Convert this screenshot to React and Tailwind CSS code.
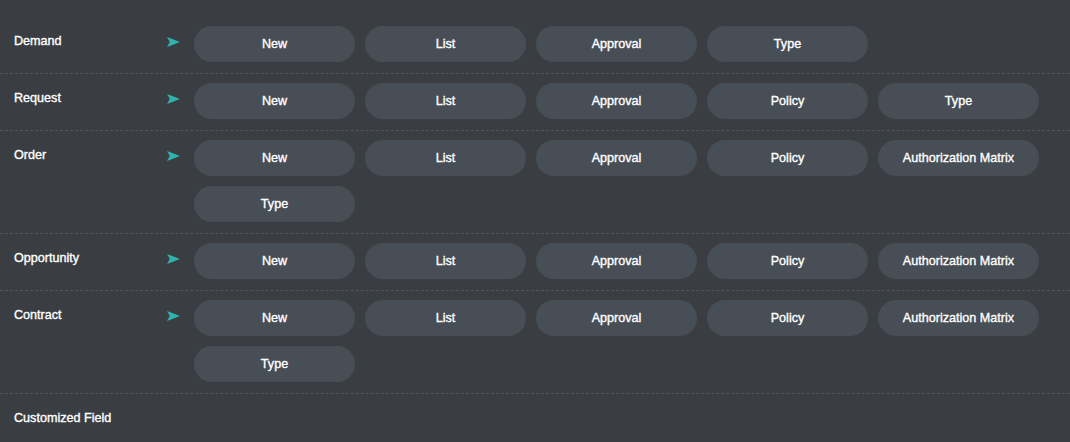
const sections = [
  { label: 'Demand', items: ['New', 'List', 'Approval', 'Type'] },
  { label: 'Request', items: ['New', 'List', 'Approval', 'Policy', 'Type'] },
  { label: 'Order', items: ['New', 'List', 'Approval', 'Policy', 'Authorization Matrix', 'Type'] },
  { label: 'Opportunity', items: ['New', 'List', 'Approval', 'Policy', 'Authorization Matrix'] },
  { label: 'Contract', items: ['New', 'List', 'Approval', 'Policy', 'Authorization Matrix', 'Type'] },
  { label: 'Customized Field', items: [] },
];

function Arrow() {
  return (
    <svg width="13" height="10" viewBox="0 0 13 10" className="block">
      <path d="M0 0 L13 5 L0 10 L2.8 5 Z" fill="#2eb3ae" />
    </svg>
  );
}

export default function App() {
  return (
    <div
      className="w-[1070px] h-[442px] overflow-hidden bg-[#3a3e43] pt-[17px] text-white text-[12.6px] [-webkit-text-stroke:0.35px_#fff]"
      style={{ fontFamily: '"Liberation Sans", Arial, sans-serif' }}
    >
      {sections.map((s) => (
        <div
          key={s.label}
          className="flex pt-[9px] pb-[11px] border-b border-dashed border-[#51565c] last:border-b-0 min-h-[57px]"
        >
          <div className="w-[167px] pl-[14px] pt-[7px] leading-[16px] shrink-0">{s.label}</div>
          {s.items.length > 0 && (
            <>
              <div className="w-[27px] shrink-0 pt-[11px]">
                <Arrow />
              </div>
              <div className="flex flex-wrap gap-[10px] w-[855px]">
                {s.items.map((it, i) => (
                  <button
                    key={i}
                    className="w-[161px] h-[36px] rounded-full bg-[#474e55] text-white flex items-center justify-center"
                  >
                    {it}
                  </button>
                ))}
              </div>
            </>
          )}
        </div>
      ))}
    </div>
  );
}
